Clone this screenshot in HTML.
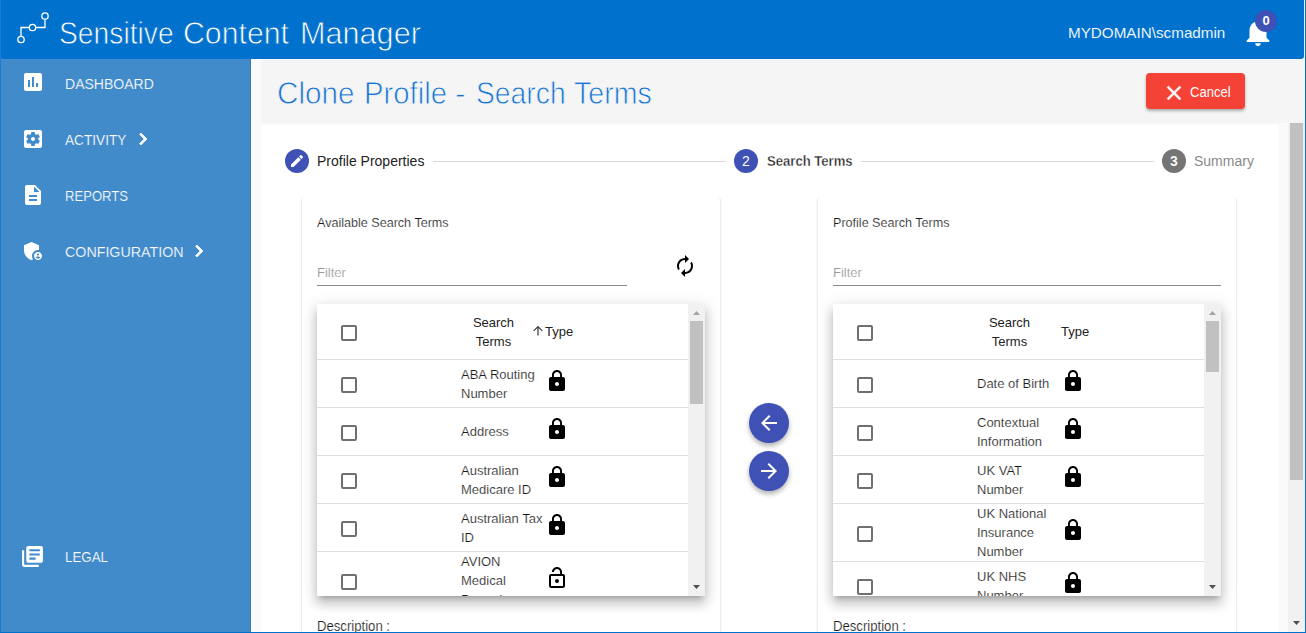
<!DOCTYPE html>
<html lang="en">
<head>
<meta charset="utf-8">
<title>Sensitive Content Manager</title>
<style>
html,body{margin:0;padding:0;}
body{width:1306px;height:633px;overflow:hidden;position:relative;background:#fafafa;font-family:"Liberation Sans",sans-serif;color:#222;}
.abs{position:absolute;}
#frame-l{left:0;top:0;width:1px;height:633px;background:#1a7ad4;z-index:50;}
#frame-r{left:1304.700px;top:0;width:1.300px;height:633px;background:#0072ce;z-index:50;}
#frame-b{left:0;top:631.700px;width:1306px;height:1.300px;background:#0072ce;z-index:50;}
#header{left:0;top:0;width:1304px;height:58.500px;background:#0072ce;z-index:10;border-radius:0 0 3px 3px;}
#apptitle{left:59px;top:12.5px;font-size:32px;line-height:40px;color:#fff;white-space:nowrap;-webkit-text-stroke:.8px #0072ce;}
#apptitle span{position:absolute;top:0;left:0;transform-origin:0 0;}
#user{left:1068px;top:22.500px;font-size:15px;line-height:20px;color:#fff;white-space:nowrap;-webkit-text-stroke:.12px #0072ce;transform-origin:0 0;transform:scaleX(1.015);}
#sidebar{left:0;top:58px;width:250px;height:575px;background:#428bca;border-right:1px solid #3277b8;box-shadow:1px 0 0 #fff;}
.nav{left:65px;font-size:15.5px;line-height:20px;color:#fff;-webkit-text-stroke:.2px #428bca;white-space:nowrap;transform-origin:0 0;}
#titlebar{left:261px;top:58px;width:1044px;height:65px;background:#f5f5f5;}
#pagetitle{left:276px;top:73px;font-size:32px;line-height:40px;color:#1673d3;white-space:nowrap;-webkit-text-stroke:.8px #f5f5f5;}
#pagetitle span{position:absolute;top:0;left:0;transform-origin:0 0;transform:scaleX(.916);}
#cancel{left:1146px;top:73px;width:99px;height:36px;background:#f44336;border-radius:4px;box-shadow:0 2px 3px rgba(0,0,0,.3);}
#cancel span{position:absolute;left:44px;top:10px;font-size:14px;line-height:18px;color:#fff;transform-origin:0 0;transform:scaleX(.93);}
#content{left:261px;top:125px;width:1017px;height:510px;background:#fff;}
#pagescroll{left:1288px;top:123px;width:17px;height:509px;background:#f1f1f1;}
#pagescroll i{position:absolute;left:2px;top:0;width:13px;height:357px;background:#c1c1c1;}
.stepc{width:24px;height:24px;border-radius:12px;background:#3f51b5;color:#fff;font-size:14px;line-height:24px;text-align:center;}
.stept{top:152px;font-size:14px;line-height:18px;color:#222;white-space:nowrap;}
.stepl{top:161px;height:1px;background:#d9d9d9;}
.card{top:197px;width:420px;height:440px;box-sizing:border-box;background:#fff;border-radius:4px;border-left:1px solid #ececec;border-right:1px solid #ececec;box-shadow:0 1px 3px 0 rgba(0,0,0,.05);}
.ctitle{top:215px;font-size:13px;line-height:16px;color:#1a1a1a;-webkit-text-stroke:.18px #fff;white-space:nowrap;transform-origin:0 0;transform:scaleX(.967);}
.filter{top:265px;font-size:13px;line-height:16px;color:#9a9a9a;-webkit-text-stroke:.15px #fff;}
.fline{top:285px;height:1px;background:#8a8a8a;}
.tbl{top:304px;width:388px;height:292px;background:#fff;overflow:hidden;box-shadow:0 5px 5px -3px rgba(0,0,0,.2),0 8px 10px 1px rgba(0,0,0,.14),0 3px 14px 2px rgba(0,0,0,.12);}
.row{position:absolute;left:0;width:371px;border-bottom:1px solid #e0e0e0;}
.cb{position:absolute;left:24px;width:12px;height:12px;border:2px solid #707070;border-radius:2px;}
.tx{position:absolute;left:144px;width:84px;font-size:13px;line-height:19px;color:#1a1a1a;-webkit-text-stroke:.18px #fff;}
.hd{position:absolute;font-size:13px;line-height:19px;color:#222;}
.lock{position:absolute;left:227.5px;margin-top:-1px;width:24px;height:24px;}
.vs{position:absolute;left:371px;top:0;width:17px;height:292px;background:#f1f1f1;}
.vs i{position:absolute;left:2px;width:13px;background:#c1c1c1;}
.fab{left:749px;width:40px;height:40px;border-radius:20px;background:#3f51b5;box-shadow:0 3px 5px rgba(0,0,0,.3);}
.desc{top:618px;font-size:14px;line-height:16px;color:#1a1a1a;-webkit-text-stroke:.2px #fff;white-space:nowrap;transform-origin:0 0;transform:scaleX(.938);}
</style>
</head>
<body>
<div class="abs" id="sidebar"></div>
<div class="abs" id="header">
  <svg class="abs" style="left:14px;top:8px" width="40" height="40" viewBox="0 0 40 40" fill="none" stroke="#fff" stroke-width="1.3">
    <circle cx="31" cy="8" r="3.2"/><circle cx="18.5" cy="19.5" r="3.2"/><circle cx="7" cy="31.5" r="3.2"/>
    <path d="M31 11.2V19.5H21.7M15.3 19.5H7V28.3"/>
  </svg>
  <div class="abs" id="apptitle"><span style="transform:scaleX(.883)">Sensitive</span> <span style="left:123.500px;transform:scaleX(.946)">Content</span> <span style="left:240.500px;transform:scaleX(.957)">Manager</span></div>
  <div class="abs" id="user">MYDOMAIN\scmadmin</div>
</div>
<div class="abs nav" style="top:74px;left:64.5px;transform:scaleX(.905)">DASHBOARD</div>
<div class="abs nav" style="top:130px;transform:scaleX(.88)">ACTIVITY</div>
<div class="abs nav" style="top:186px;left:64.5px;transform:scaleX(.845)">REPORTS</div>
<div class="abs nav" style="top:242px;transform:scaleX(.92)">CONFIGURATION</div>
<div class="abs nav" style="top:547px;transform:scaleX(.86)">LEGAL</div>

<div class="abs" id="titlebar"></div>
<div class="abs" id="pagetitle"><span style="left:.7px;transform:scaleX(.927)">Clone</span> <span style="left:87.500px">Profile</span> <span style="left:179px;transform:scaleX(1)">-</span> <span style="left:200px;transform:scaleX(.884)">Search</span> <span style="left:297.500px;transform:scaleX(.892)">Terms</span></div>
<div class="abs" id="cancel"><span>Cancel</span></div>
<div class="abs" id="content"></div>
<div class="abs" id="pagescroll"><i></i><svg style="position:absolute;left:0;top:492px" width="17" height="17" viewBox="0 0 17 17"><path d="M5 6l3.500 4 3.500-4z" fill="#505050"/></svg></div>

<div class="abs stepc" style="left:285px;top:149px"></div>
<div class="abs stept" style="left:317px">Profile Properties</div>
<div class="abs stepl" style="left:433px;width:293px"></div>
<div class="abs stepc" style="left:734px;top:149px">2</div>
<div class="abs stept" style="left:767px;font-weight:bold;-webkit-text-stroke:.35px #fff;transform-origin:0 0;transform:scaleX(.935)">Search Terms</div>
<div class="abs stepl" style="left:861px;width:293px"></div>
<div class="abs stepc" style="left:1162px;top:149px;background:#757575;font-weight:bold;-webkit-text-stroke:.12px #757575">3</div>
<div class="abs stept" style="left:1194px;color:#8a8a8a">Summary</div>

<div class="abs card" style="left:301px"></div>
<div class="abs card" style="left:817px"></div>
<div class="abs ctitle" style="left:317px">Available Search Terms</div>
<div class="abs ctitle" style="left:833px">Profile Search Terms</div>
<div class="abs filter" style="left:317px">Filter</div>
<div class="abs filter" style="left:833px">Filter</div>
<div class="abs fline" style="left:317px;width:310px"></div>
<div class="abs fline" style="left:833px;width:388px"></div>

<div class="abs tbl" id="t1" style="left:317px">
<div class="row" style="top:0;height:55px"><span class="cb" style="top:21px"></span><span class="hd" style="left:143px;top:9px;width:67px;text-align:center">Search<br>Terms</span><svg style="position:absolute;left:215px;top:21px" width="12" height="12" viewBox="0 0 12 12"><path d="M6 10.400V1.800M1.700 5.900L6 1.600l4.300 4.300" fill="none" stroke="#444" stroke-width="1.300"/></svg><span class="hd" style="left:228px;top:18px">Type</span></div>
<div class="row" style="top:56px;height:47px"><span class="cb" style="top:17px"></span><span class="tx" style="top:5px">ABA Routing<br>Number</span><svg class="lock" style="top:10px" viewBox="0 0 24 24"><path fill="#000" d="M18 8h-1V6c0-2.76-2.24-5-5-5S7 3.24 7 6v2H6c-1.1 0-2 .9-2 2v10c0 1.1.9 2 2 2h12c1.1 0 2-.9 2-2V10c0-1.1-.9-2-2-2zm-6 9c-1.1 0-2-.9-2-2s.9-2 2-2 2 .9 2 2-.9 2-2 2zm3.1-9H8.900V6c0-1.710 1.390-3.100 3.100-3.100 1.710 0 3.100 1.390 3.100 3.100v2z"/></svg></div>
<div class="row" style="top:104px;height:47px"><span class="cb" style="top:17px"></span><span class="tx" style="top:14px">Address</span><svg class="lock" style="top:10px" viewBox="0 0 24 24"><path fill="#000" d="M18 8h-1V6c0-2.76-2.24-5-5-5S7 3.24 7 6v2H6c-1.1 0-2 .9-2 2v10c0 1.1.9 2 2 2h12c1.1 0 2-.9 2-2V10c0-1.1-.9-2-2-2zm-6 9c-1.1 0-2-.9-2-2s.9-2 2-2 2 .9 2 2-.9 2-2 2zm3.1-9H8.900V6c0-1.710 1.390-3.100 3.100-3.100 1.710 0 3.100 1.390 3.100 3.100v2z"/></svg></div>
<div class="row" style="top:152px;height:47px"><span class="cb" style="top:17px"></span><span class="tx" style="top:5px">Australian<br>Medicare ID</span><svg class="lock" style="top:10px" viewBox="0 0 24 24"><path fill="#000" d="M18 8h-1V6c0-2.76-2.24-5-5-5S7 3.24 7 6v2H6c-1.1 0-2 .9-2 2v10c0 1.1.9 2 2 2h12c1.1 0 2-.9 2-2V10c0-1.1-.9-2-2-2zm-6 9c-1.1 0-2-.9-2-2s.9-2 2-2 2 .9 2 2-.9 2-2 2zm3.1-9H8.900V6c0-1.710 1.390-3.100 3.100-3.100 1.710 0 3.100 1.390 3.100 3.100v2z"/></svg></div>
<div class="row" style="top:200px;height:47px"><span class="cb" style="top:17px"></span><span class="tx" style="top:5px">Australian Tax<br>ID</span><svg class="lock" style="top:10px" viewBox="0 0 24 24"><path fill="#000" d="M18 8h-1V6c0-2.76-2.24-5-5-5S7 3.24 7 6v2H6c-1.1 0-2 .9-2 2v10c0 1.1.9 2 2 2h12c1.1 0 2-.9 2-2V10c0-1.1-.9-2-2-2zm-6 9c-1.1 0-2-.9-2-2s.9-2 2-2 2 .9 2 2-.9 2-2 2zm3.1-9H8.900V6c0-1.710 1.390-3.100 3.100-3.100 1.710 0 3.100 1.390 3.100 3.100v2z"/></svg></div>
<div class="row" style="top:248px;height:57px"><span class="cb" style="top:22px"></span><span class="tx" style="top:0px">AVION<br>Medical<br>Procedures</span><svg class="lock" style="top:15px" viewBox="0 0 24 24"><path fill="#000" d="M12 17c1.1 0 2-.9 2-2s-.9-2-2-2-2 .9-2 2 .9 2 2 2zm6-9h-1V6c0-2.760-2.240-5-5-5S7 3.240 7 6h1.900c0-1.710 1.390-3.100 3.100-3.100 1.710 0 3.100 1.390 3.100 3.100v2H6c-1.100 0-2 .9-2 2v10c0 1.100.9 2 2 2h12c1.100 0 2-.9 2-2V10c0-1.100-.9-2-2-2zm0 12H6V10h12v10z"/></svg></div>
<div class="vs"><i style="top:17px;height:83px"></i><svg style="position:absolute;left:0;top:0" width="17" height="17" viewBox="0 0 17 17"><path d="M5 11l3.500-4 3.500 4z" fill="#a3a3a3"/></svg><svg style="position:absolute;left:0;top:275px" width="17" height="17" viewBox="0 0 17 17"><path d="M5 6l3.500 4 3.500-4z" fill="#505050"/></svg></div>
</div>
<div class="abs tbl" id="t2" style="left:833px">
<div class="row" style="top:0;height:55px"><span class="cb" style="top:21px"></span><span class="hd" style="left:143px;top:9px;width:67px;text-align:center">Search<br>Terms</span><span class="hd" style="left:228px;top:18px">Type</span></div>
<div class="row" style="top:56px;height:47px"><span class="cb" style="top:17px"></span><span class="tx" style="top:14px">Date of Birth</span><svg class="lock" style="top:10px" viewBox="0 0 24 24"><path fill="#000" d="M18 8h-1V6c0-2.76-2.24-5-5-5S7 3.24 7 6v2H6c-1.1 0-2 .9-2 2v10c0 1.1.9 2 2 2h12c1.1 0 2-.9 2-2V10c0-1.1-.9-2-2-2zm-6 9c-1.1 0-2-.9-2-2s.9-2 2-2 2 .9 2 2-.9 2-2 2zm3.1-9H8.900V6c0-1.710 1.390-3.100 3.100-3.100 1.710 0 3.100 1.390 3.100 3.100v2z"/></svg></div>
<div class="row" style="top:104px;height:47px"><span class="cb" style="top:17px"></span><span class="tx" style="top:5px">Contextual<br>Information</span><svg class="lock" style="top:10px" viewBox="0 0 24 24"><path fill="#000" d="M18 8h-1V6c0-2.76-2.24-5-5-5S7 3.24 7 6v2H6c-1.1 0-2 .9-2 2v10c0 1.1.9 2 2 2h12c1.1 0 2-.9 2-2V10c0-1.1-.9-2-2-2zm-6 9c-1.1 0-2-.9-2-2s.9-2 2-2 2 .9 2 2-.9 2-2 2zm3.1-9H8.900V6c0-1.710 1.390-3.100 3.100-3.100 1.710 0 3.100 1.390 3.100 3.100v2z"/></svg></div>
<div class="row" style="top:152px;height:47px"><span class="cb" style="top:17px"></span><span class="tx" style="top:5px">UK VAT<br>Number</span><svg class="lock" style="top:10px" viewBox="0 0 24 24"><path fill="#000" d="M18 8h-1V6c0-2.76-2.24-5-5-5S7 3.24 7 6v2H6c-1.1 0-2 .9-2 2v10c0 1.1.9 2 2 2h12c1.1 0 2-.9 2-2V10c0-1.1-.9-2-2-2zm-6 9c-1.1 0-2-.9-2-2s.9-2 2-2 2 .9 2 2-.9 2-2 2zm3.1-9H8.900V6c0-1.710 1.390-3.100 3.100-3.100 1.710 0 3.100 1.390 3.100 3.100v2z"/></svg></div>
<div class="row" style="top:200px;height:57px"><span class="cb" style="top:22px"></span><span class="tx" style="top:0px">UK National<br>Insurance<br>Number</span><svg class="lock" style="top:15px" viewBox="0 0 24 24"><path fill="#000" d="M18 8h-1V6c0-2.76-2.24-5-5-5S7 3.24 7 6v2H6c-1.1 0-2 .9-2 2v10c0 1.1.9 2 2 2h12c1.1 0 2-.9 2-2V10c0-1.1-.9-2-2-2zm-6 9c-1.1 0-2-.9-2-2s.9-2 2-2 2 .9 2 2-.9 2-2 2zm3.1-9H8.900V6c0-1.710 1.390-3.100 3.100-3.100 1.710 0 3.100 1.390 3.100 3.100v2z"/></svg></div>
<div class="row" style="top:258px;height:47px"><span class="cb" style="top:17px"></span><span class="tx" style="top:5px">UK NHS<br>Number</span><svg class="lock" style="top:10px" viewBox="0 0 24 24"><path fill="#000" d="M18 8h-1V6c0-2.76-2.24-5-5-5S7 3.24 7 6v2H6c-1.1 0-2 .9-2 2v10c0 1.1.9 2 2 2h12c1.1 0 2-.9 2-2V10c0-1.1-.9-2-2-2zm-6 9c-1.1 0-2-.9-2-2s.9-2 2-2 2 .9 2 2-.9 2-2 2zm3.1-9H8.900V6c0-1.710 1.390-3.100 3.100-3.100 1.710 0 3.100 1.390 3.100 3.100v2z"/></svg></div>
<div class="vs"><i style="top:17px;height:51px"></i><svg style="position:absolute;left:0;top:0" width="17" height="17" viewBox="0 0 17 17"><path d="M5 11l3.500-4 3.500 4z" fill="#a3a3a3"/></svg><svg style="position:absolute;left:0;top:275px" width="17" height="17" viewBox="0 0 17 17"><path d="M5 6l3.500 4 3.500-4z" fill="#505050"/></svg></div>
</div>

<div class="abs fab" style="top:403px"></div>
<div class="abs fab" style="top:451px"></div>
<div class="abs desc" style="left:317px">Description :</div>
<div class="abs desc" style="left:833px">Description :</div>

<svg class="abs" style="left:21px;top:70px;" width="24" height="24" viewBox="0 0 24 24"><path fill="#fff" d="M19 3H5c-1.1 0-2 .9-2 2v14c0 1.1.9 2 2 2h14c1.1 0 2-.9 2-2V5c0-1.1-.9-2-2-2zM9 17H7v-7h2v7zm4 0h-2V7h2v10zm4 0h-2v-4h2v4z"/></svg>
<svg class="abs" style="left:21px;top:127px;" width="24" height="24" viewBox="0 0 24 24"><path fill="#fff" d="M12 10c-1.1 0-2 .9-2 2s.9 2 2 2 2-.9 2-2-.9-2-2-2zm7-7H5c-1.11 0-2 .9-2 2v14c0 1.1.89 2 2 2h14c1.11 0 2-.9 2-2V5c0-1.1-.89-2-2-2zm-1.750 9c0 .23-.02.46-.05.68l1.480 1.160c.13.11.17.3.08.45l-1.400 2.420c-.09.15-.27.21-.43.15l-1.740-.7c-.36.28-.76.51-1.180.69l-.26 1.850c-.03.17-.18.3-.35.3h-2.800c-.17 0-.32-.13-.35-.29l-.26-1.850c-.43-.18-.82-.41-1.180-.69l-1.740.7c-.16.06-.34 0-.43-.15l-1.400-2.420c-.09-.15-.05-.34.08-.45l1.480-1.160c-.03-.23-.05-.46-.05-.69 0-.23.02-.46.05-.68l-1.480-1.160c-.13-.11-.17-.3-.08-.45l1.400-2.420c.09-.15.27-.21.43-.15l1.740.7c.36-.28.76-.51 1.180-.69l.26-1.850c.03-.17.18-.3.35-.3h2.800c.17 0 .32.13.35.29l.26 1.850c.43.18.82.41 1.180.69l1.740-.7c.16-.06.34 0 .43.15l1.400 2.420c.09.15.05.34-.08.45l-1.480 1.160c.03.23.05.46.05.69z"/></svg>
<svg class="abs" style="left:21px;top:183px;" width="24" height="24" viewBox="0 0 24 24"><path fill="#fff" d="M14 2H6c-1.1 0-1.990.9-1.990 2L4 20c0 1.100.89 2 1.990 2H18c1.100 0 2-.9 2-2V8l-6-6zm2 16H8v-2h8v2zm0-4H8v-2h8v2zm-3-5V3.500L18.500 9H13z"/></svg>
<svg class="abs" style="left:21px;top:239px;" width="24" height="24" viewBox="0 0 24 24"><path fill="#fff" d="M17 11c.34 0 .67.04 1 .09V6.270L10.500 3 3 6.270v4.910c0 4.540 3.200 8.790 7.500 9.820.55-.13 1.080-.32 1.600-.55-.69-.98-1.100-2.170-1.100-3.450 0-3.310 2.690-6 6-6zM17 13c-2.210 0-4 1.790-4 4s1.790 4 4 4 4-1.790 4-4-1.790-4-4-4zm0 1.380c.62 0 1.120.51 1.120 1.120s-.51 1.120-1.120 1.120-1.120-.51-1.120-1.120.5-1.120 1.120-1.120zm0 5.370c-.93 0-1.740-.46-2.240-1.170.05-.72 1.510-1.080 2.240-1.080s2.190.36 2.240 1.080c-.5.71-1.310 1.170-2.240 1.170z"/></svg>
<svg class="abs" style="left:20.300px;top:543.500px;" width="25" height="25" viewBox="0 0 24 24"><path fill="#fff" d="M4 6H2v14c0 1.100.9 2 2 2h14v-2H4V6zm16-4H8c-1.100 0-2 .9-2 2v12c0 1.100.9 2 2 2h12c1.100 0 2-.9 2-2V4c0-1.100-.9-2-2-2zm-1 9H9V9h10v2zm-4 4H9v-2h6v2zm4-8H9V5h10v2z"/></svg>
<svg class="abs" style="left:131px;top:127px;" width="24" height="24" viewBox="0 0 24 24"><path fill="#fff" stroke="#fff" stroke-width=".7" d="M10 6L8.590 7.410 13.170 12l-4.580 4.590L10 18l6-6z"/></svg>
<svg class="abs" style="left:187px;top:239px;" width="24" height="24" viewBox="0 0 24 24"><path fill="#fff" stroke="#fff" stroke-width=".7" d="M10 6L8.590 7.410 13.170 12l-4.580 4.590L10 18l6-6z"/></svg>
<svg class="abs" style="left:1241px;top:15px;z-index:11" width="34" height="34" viewBox="0 0 24 24"><path fill="#fff" d="M12 22c1.100 0 2-.9 2-2h-4c0 1.100.89 2 2 2zm6-6v-5c0-3.070-1.640-5.640-4.500-6.320V4c0-.83-.67-1.500-1.500-1.500s-1.500.67-1.500 1.500v.68C7.630 5.360 6 7.920 6 11v5l-2 2v1h16v-1l-2-2z"/></svg>
<div class="abs" style="left:1255px;top:10px;width:22px;height:22px;border-radius:11px;background:#3f51b5;color:#fff;font-size:13px;font-weight:bold;line-height:22px;text-align:center;z-index:12">0</div>
<svg class="abs" style="left:1162px;top:81px;z-index:3" width="24" height="24" viewBox="0 0 24 24"><path fill="#fff" stroke="#fff" stroke-width=".5" d="M19 6.410L17.590 5 12 10.590 6.410 5 5 6.410 10.590 12 5 17.590 6.410 19 12 13.410 17.590 19 19 17.590 13.410 12z"/></svg>
<svg class="abs" style="left:289px;top:153px;" width="16" height="16" viewBox="0 0 24 24"><path fill="#fff" d="M3 17.250V21h3.750L17.810 9.940l-3.750-3.750L3 17.250zM20.710 7.040c.39-.39.39-1.020 0-1.410l-2.340-2.340c-.39-.39-1.020-.39-1.410 0l-1.830 1.830 3.750 3.750 1.830-1.830z"/></svg>
<svg class="abs" style="left:673px;top:254px;" width="24" height="24" viewBox="0 0 24 24"><path fill="#000" d="M12 6v3l4-4-4-4v3c-4.420 0-8 3.580-8 8 0 1.570.46 3.030 1.240 4.260L6.700 14.800c-.45-.83-.7-1.790-.7-2.800 0-3.310 2.690-6 6-6zm6.760 1.740L17.300 9.200c.44.84.7 1.790.7 2.800 0 3.310-2.690 6-6 6v-3l-4 4 4 4v-3c4.420 0 8-3.580 8-8 0-1.570-.46-3.030-1.240-4.260z"/></svg>
<svg class="abs" style="left:757px;top:411px;" width="24" height="24" viewBox="0 0 24 24"><path fill="#fff" d="M20 11H7.830l5.590-5.590L12 4l-8 8 8 8 1.410-1.410L7.830 13H20v-2z"/></svg>
<svg class="abs" style="left:757px;top:459px;" width="24" height="24" viewBox="0 0 24 24"><path fill="#fff" d="M12 4l-1.410 1.410L16.170 11H4v2h12.170l-5.580 5.590L12 20l8-8z"/></svg>
<div class="abs" id="frame-l"></div>
<div class="abs" id="frame-r"></div>
<div class="abs" id="frame-b"></div>
</body>
</html>
